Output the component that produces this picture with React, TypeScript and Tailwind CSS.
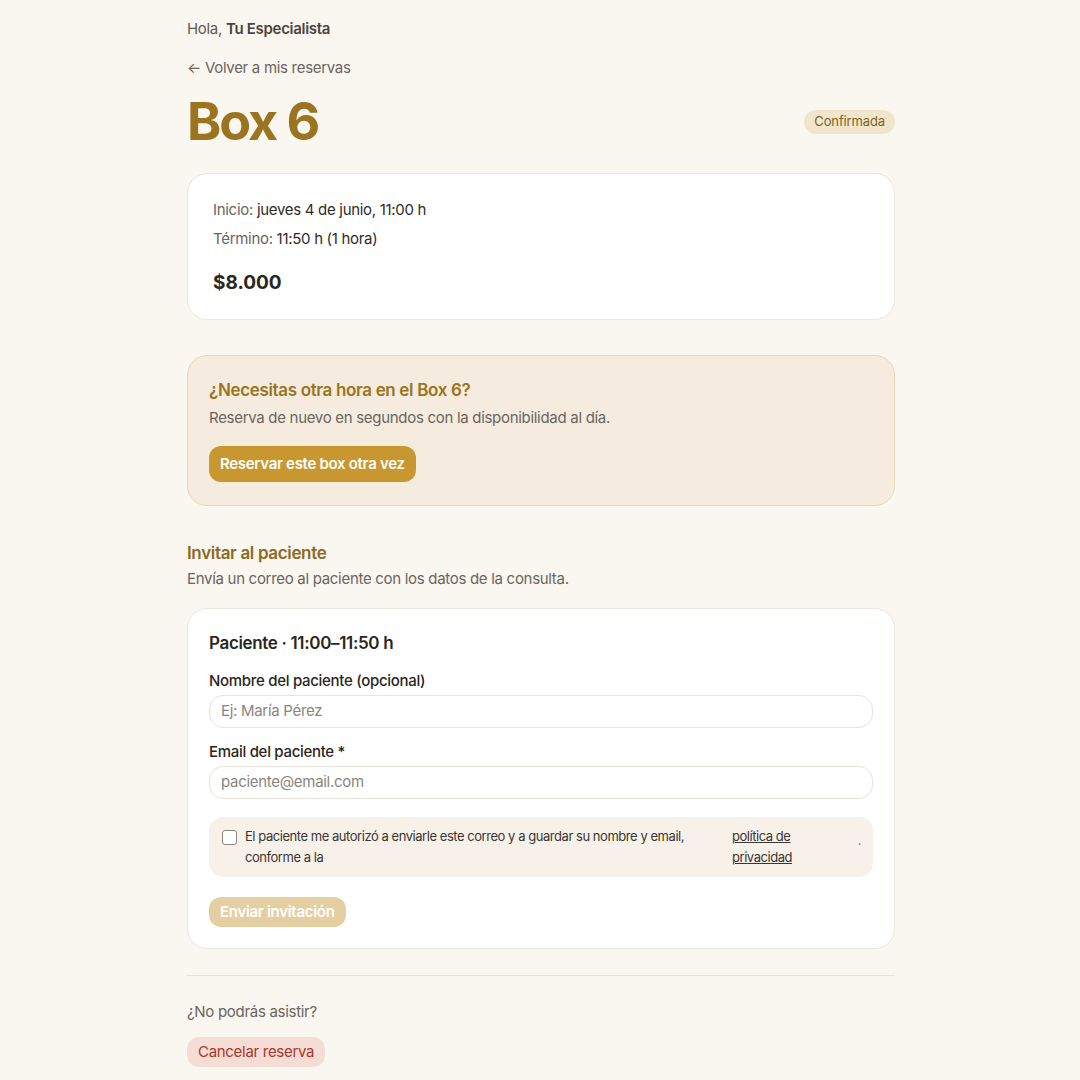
import React from 'react';

const font = { fontFamily: 'Inter, "Noto Sans", sans-serif' };

const Field = ({ label, placeholder }: { label: string; placeholder: string }) => (
  <div className="flex flex-col">
    <label className="text-[15px] font-medium text-[#2a2622] tracking-[-0.02em] leading-5 mb-[4px]">{label}</label>
    <div className="h-[33px] rounded-[14px] border border-[#e7e2da] bg-white px-[11px] flex items-center text-[15px] text-[#8a857e] tracking-[-0.02em]">
      {placeholder}
    </div>
  </div>
);

const App = () => {
  return (
    <div className="min-h-[1080px] bg-[#faf6f0]" style={font}>
      <div className="w-[708px] ml-[187px] pt-[19px] pb-[14px]">
        <p className="text-[15px] text-[#5f5a54] tracking-[-0.02em] leading-5">
          Hola, <span className="font-semibold text-[#4a4540]">Tu Especialista</span>
        </p>
        <p className="mt-[19px] text-[15px] text-[#6a655e] tracking-[-0.02em] leading-5">← Volver a mis reservas</p>

        <div className="mt-[14px] flex items-center justify-between">
          <h1 className="text-[52px] font-bold text-[#9a7420] tracking-[-0.04em] leading-[60px]">Box 6</h1>
          <span className="rounded-full bg-[#f1e6cc] px-[10px] py-[2px] text-[13px] text-[#7d6326] tracking-[-0.01em]">Confirmada</span>
        </div>

        <div className="mt-[21px] rounded-[20px] border border-[#ece6dc] bg-white px-[25px] pt-[26px] pb-[24px]">
          <p className="text-[15px] text-[#6a655e] tracking-[-0.02em] leading-5">
            Inicio: <span className="text-[#2f2b27]">jueves 4 de junio, 11:00 h</span>
          </p>
          <p className="mt-[9px] text-[15px] text-[#6a655e] tracking-[-0.02em] leading-5">
            Término: <span className="text-[#2f2b27]">11:50 h (1 hora)</span>
          </p>
          <p className="mt-[22px] text-[19px] font-bold text-[#2a2622] leading-6">$8.000</p>
        </div>

        <div className="mt-[35px] rounded-[20px] border border-[#ecd7b3] bg-[#f5ecdf] px-[21px] pt-[22px] pb-[23px]">
          <h2 className="text-[17px] font-semibold text-[#9a7420] tracking-[-0.02em] leading-6">¿Necesitas otra hora en el Box 6?</h2>
          <p className="mt-[6px] text-[15px] text-[#6a655e] tracking-[-0.02em] leading-5">Reserva de nuevo en segundos con la disponibilidad al día.</p>
          <button className="mt-[18px] h-[36px] rounded-[12px] bg-[#c9972f] px-[11px] text-[15px] font-semibold text-white tracking-[-0.02em]">
            Reservar este box otra vez
          </button>
        </div>

        <h2 className="mt-[35px] text-[17px] font-semibold text-[#8c6a22] tracking-[-0.02em] leading-6">Invitar al paciente</h2>
        <p className="mt-[4px] text-[15px] text-[#6a655e] tracking-[-0.02em] leading-5">Envía un correo al paciente con los datos de la consulta.</p>

        <div className="mt-[19px] rounded-[20px] border border-[#ece6dc] bg-white px-[21px] pt-[22px] pb-[21px]">
          <h3 className="text-[17px] font-semibold text-[#2a2622] tracking-[-0.02em] leading-6">Paciente · 11:00–11:50 h</h3>
          <div className="mt-[16px] flex flex-col gap-[14px]">
            <Field label="Nombre del paciente (opcional)" placeholder="Ej: María Pérez" />
            <Field label="Email del paciente *" placeholder="paciente@email.com" />
          </div>
          <div className="mt-[18px] rounded-[14px] bg-[#f7f1e9] pl-[13px] pr-[12px] py-[9px] flex items-start gap-[8px] text-[13px] text-[#3a3632] tracking-[-0.035em] leading-[21px]">
            <span className="mt-[4px] h-[15px] w-[15px] shrink-0 rounded-[3px] border border-[#8a857e] bg-white" />
            <span className="w-[470px]">El paciente me autorizó a enviarle este correo y a guardar su nombre y email, conforme a la</span>
            <span className="ml-[9px] w-[70px] underline text-[#3a3632]">política de privacidad</span>
            <span className="ml-auto mt-[4px] text-[#8a857e]">.</span>
          </div>
          <button className="mt-[20px] h-[30px] rounded-[12px] bg-[#e5cfa2] px-[11px] text-[15px] font-semibold text-white tracking-[-0.02em]">
            Enviar invitación
          </button>
        </div>

        <div className="mt-[26px] h-px bg-[#e7e1d8]" />

        <p className="mt-[26px] text-[15px] text-[#6a655e] tracking-[-0.02em] leading-5">¿No podrás asistir?</p>
        <button className="mt-[15px] h-[30px] rounded-[12px] bg-[#f5dcd5] px-[11px] text-[15px] text-[#a8372c] tracking-[-0.02em]">
          Cancelar reserva
        </button>
      </div>
    </div>
  );
};

export default App;
